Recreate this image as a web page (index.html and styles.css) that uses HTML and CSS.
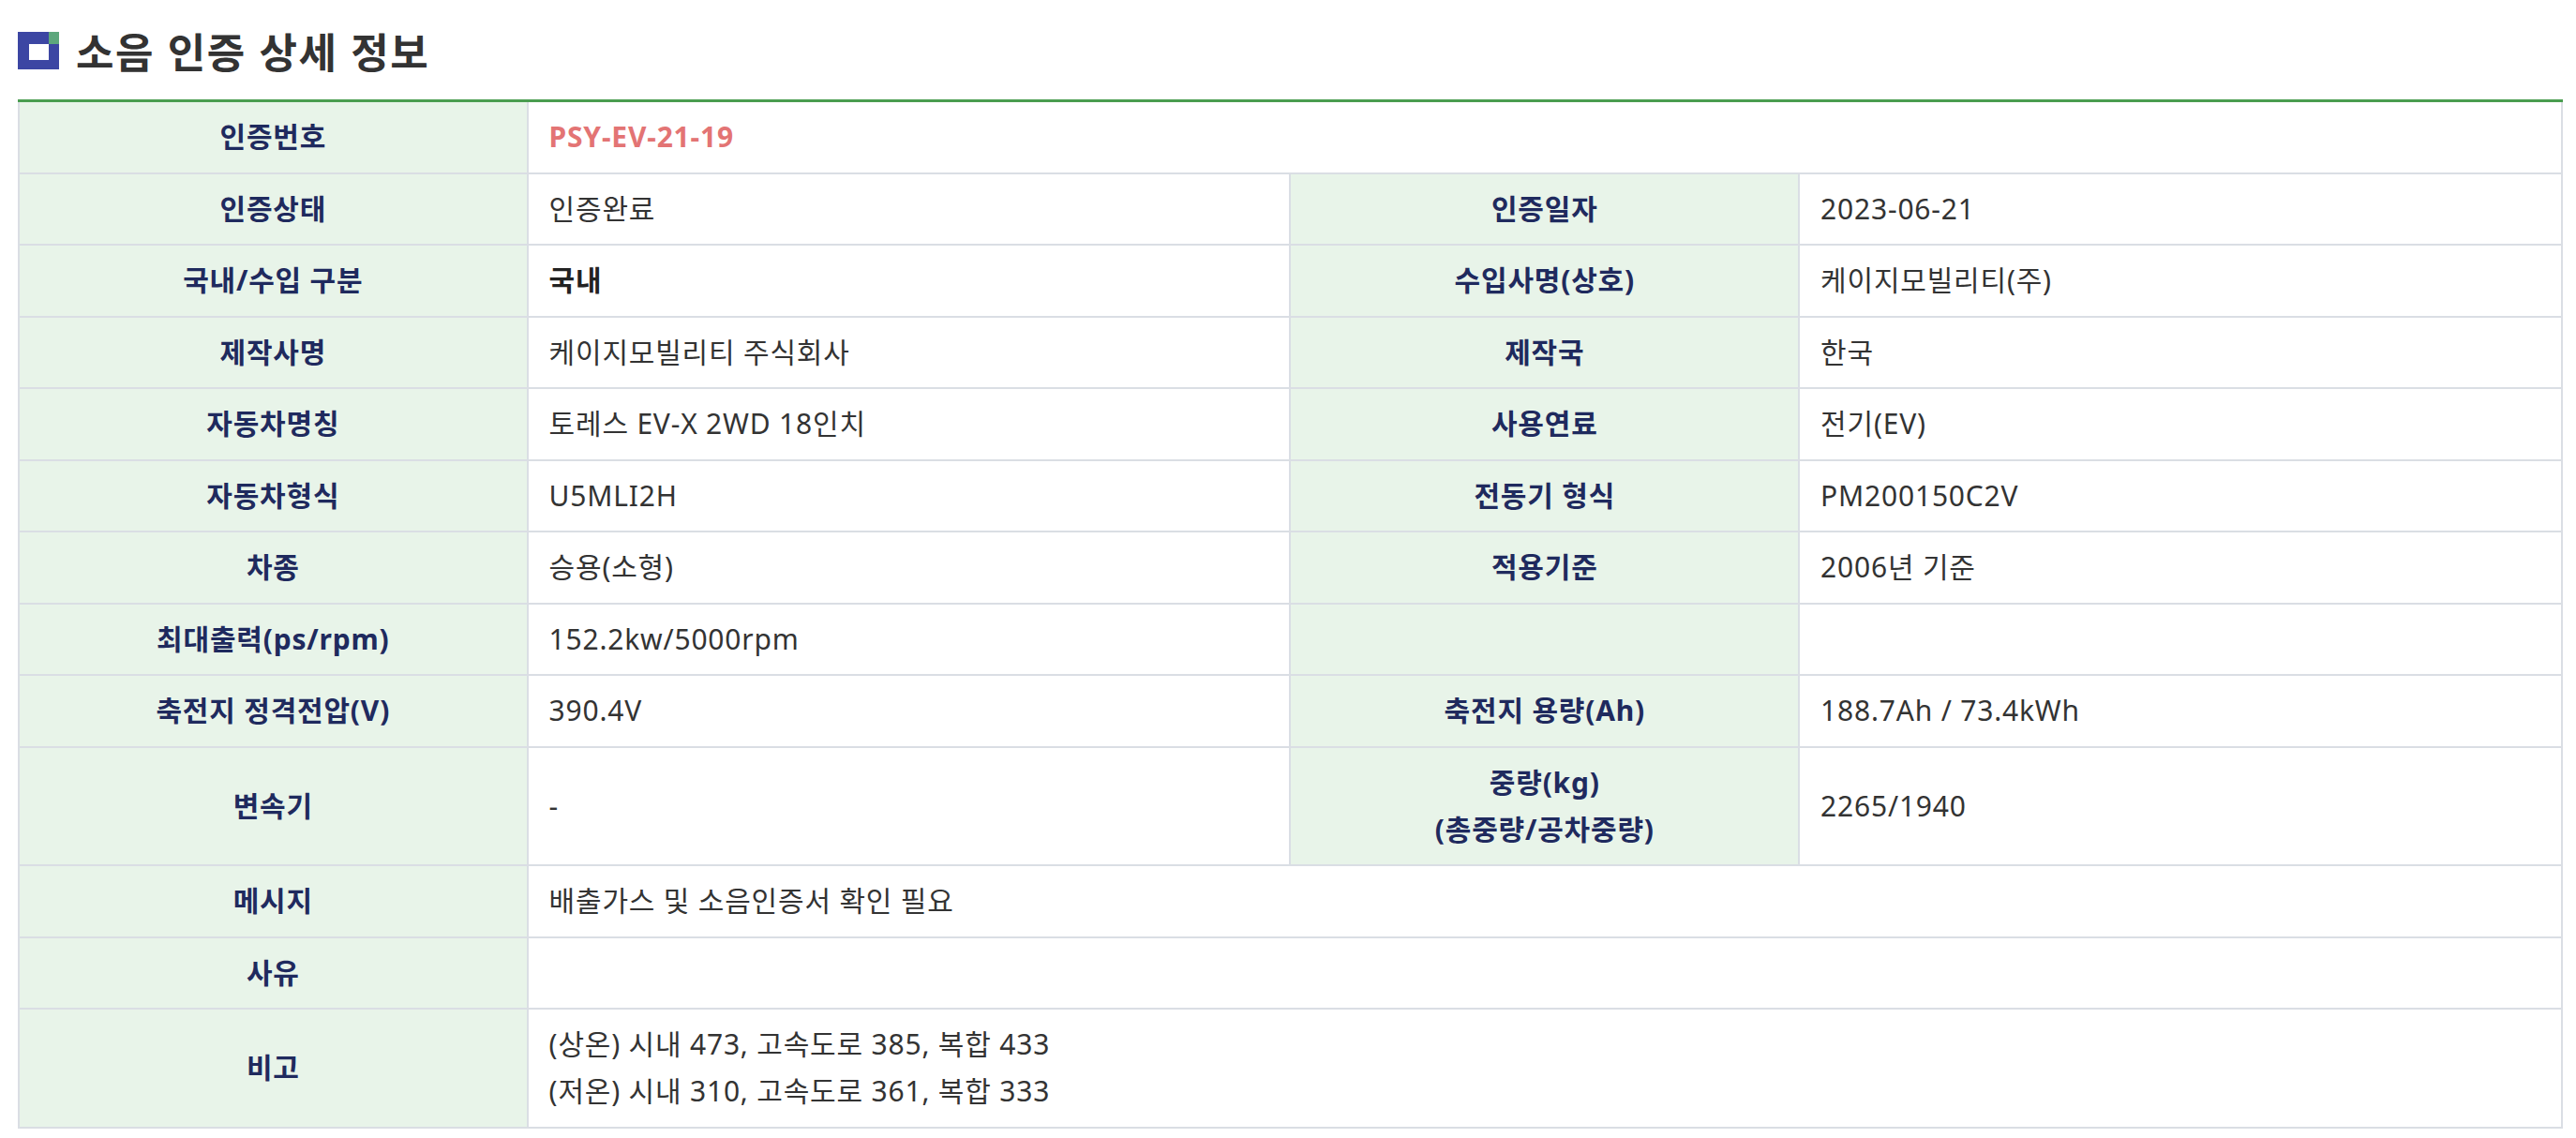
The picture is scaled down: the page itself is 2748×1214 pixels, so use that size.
FILE: index.html
```html
<!DOCTYPE html>
<html lang="ko">
<head>
<meta charset="utf-8">
<title>소음 인증 상세 정보</title>
<link rel="stylesheet" href="styles.css">
</head>
<body>
<div class="page">
  <h2 class="title">
    <svg class="title-icon" viewBox="0 0 44 40" width="44" height="40" aria-hidden="true">
      <rect x="0" y="0" width="44" height="40" fill="#3c46a3"/>
      <rect x="12" y="13" width="21" height="17" fill="#ffffff"/>
      <rect x="33" y="0" width="11" height="13" fill="#5da77c"/>
    </svg>
    <span>소음 인증 상세 정보</span>
  </h2>
  <table class="detail">
    <colgroup>
      <col class="c-label"><col class="c-value"><col class="c-label"><col class="c-value">
    </colgroup>
    <tbody>
      <tr><th>인증번호</th><td colspan="3" class="code">PSY-EV-21-19</td></tr>
      <tr><th>인증상태</th><td>인증완료</td><th>인증일자</th><td>2023-06-21</td></tr>
      <tr><th>국내/수입 구분</th><td class="strong">국내</td><th>수입사명(상호)</th><td>케이지모빌리티(주)</td></tr>
      <tr><th>제작사명</th><td>케이지모빌리티 주식회사</td><th>제작국</th><td>한국</td></tr>
      <tr><th>자동차명칭</th><td>토레스 EV-X 2WD 18인치</td><th>사용연료</th><td>전기(EV)</td></tr>
      <tr><th>자동차형식</th><td>U5MLI2H</td><th>전동기 형식</th><td>PM200150C2V</td></tr>
      <tr><th>차종</th><td>승용(소형)</td><th>적용기준</th><td>2006년 기준</td></tr>
      <tr><th>최대출력(ps/rpm)</th><td>152.2kw/5000rpm</td><th></th><td></td></tr>
      <tr><th>축전지 정격전압(V)</th><td>390.4V</td><th>축전지 용량(Ah)</th><td>188.7Ah / 73.4kWh</td></tr>
      <tr><th>변속기</th><td>-</td><th>중량(kg)<br>(총중량/공차중량)</th><td>2265/1940</td></tr>
      <tr><th>메시지</th><td colspan="3">배출가스 및 소음인증서 확인 필요</td></tr>
      <tr><th>사유</th><td colspan="3"></td></tr>
      <tr><th>비고</th><td colspan="3">(상온) 시내 473, 고속도로 385, 복합 433<br>(저온) 시내 310, 고속도로 361, 복합 333</td></tr>
    </tbody>
  </table>
</div>
</body>
</html>
```

FILE: styles.css
```css
html, body {
  margin: 0;
  padding: 0;
  background: #ffffff;
}

body {
  font-family: "Noto Sans", "Noto Sans CJK KR", sans-serif;
  color: #333333;
}

.page {
  padding: 22px 14px 0 19px;
}

.title {
  display: flex;
  align-items: center;
  gap: 18px;
  height: 64px;
  margin: 0 0 20px 0;
  font-family: "Noto Sans CJK KR", sans-serif;
  font-size: 44px;
  font-weight: 700;
  letter-spacing: 1.5px;
  line-height: 64px;
  color: #333333;
}

.title-icon {
  flex: none;
  display: block;
}

.detail {
  width: 100%;
  table-layout: fixed;
  border-collapse: collapse;
  border-top: 3px solid #4a9d50;
  border-left: 2px solid #dadee4;
  border-right: 2px solid #dadee4;
  border-bottom: 2px solid #dadee4;
  font-size: 30px;
  letter-spacing: 0.8px;
  line-height: 50px;
}

.c-label { width: 20%; }
.c-value { width: 30%; }

.detail th,
.detail td {
  border: 2px solid #dadee4;
  padding: 12px 22px 12.5px 22px;
  vertical-align: middle;
}

.detail tr:first-child th,
.detail tr:first-child td {
  border-top: 3px solid #4a9d50;
}

.detail th {
  background: #e8f4e9;
  color: #1f2a5e;
  font-family: "Noto Sans", "Noto Sans CJK KR", sans-serif;
  font-weight: 700;
  text-align: center;
}

.detail td {
  background: #ffffff;
  color: #333333;
  text-align: left;
  font-weight: 400;
}

.detail td.code {
  color: #e37474;
  font-weight: 700;
}

.detail td.strong {
  font-weight: 700;
  color: #222222;
}
```
